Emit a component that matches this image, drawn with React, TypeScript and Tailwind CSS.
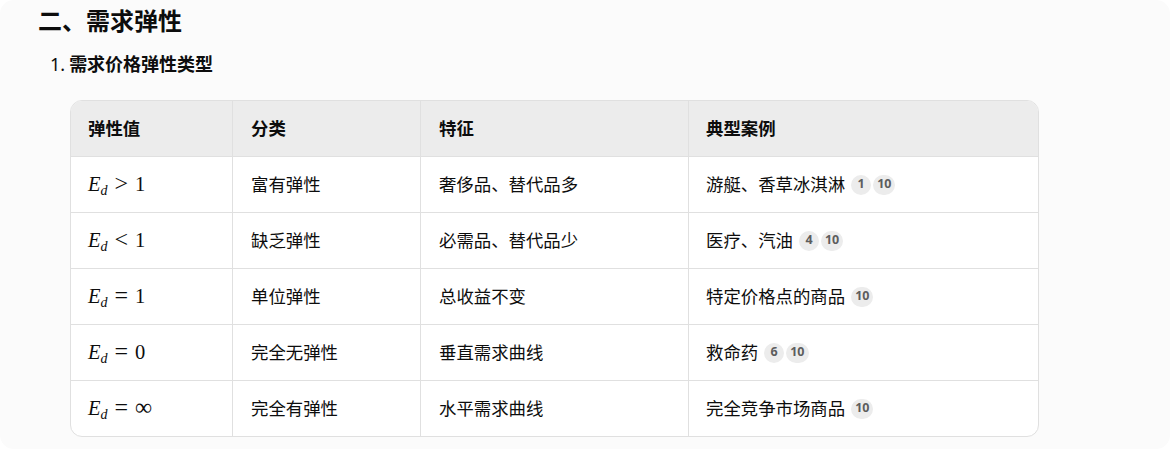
type Row = {
  rel: string;
  rhs: string;
  kind: string;
  trait: string;
  cases: string;
  refs: string[];
};

const rows: Row[] = [
  { rel: ">", rhs: "1", kind: "富有弹性", trait: "奢侈品、替代品多", cases: "游艇、香草冰淇淋", refs: ["1", "10"] },
  { rel: "<", rhs: "1", kind: "缺乏弹性", trait: "必需品、替代品少", cases: "医疗、汽油", refs: ["4", "10"] },
  { rel: "=", rhs: "1", kind: "单位弹性", trait: "总收益不变", cases: "特定价格点的商品", refs: ["10"] },
  { rel: "=", rhs: "0", kind: "完全无弹性", trait: "垂直需求曲线", cases: "救命药", refs: ["6", "10"] },
  { rel: "=", rhs: "∞", kind: "完全有弹性", trait: "水平需求曲线", cases: "完全竞争市场商品", refs: ["10"] },
];

const cjk = "font-['Segoe_UI','Noto_Sans','Noto_Sans_CJK_SC',sans-serif]";

function Badge({ n }: { n: string }) {
  return (
    <span className="inline-flex h-[20px] min-w-[20px] items-center justify-center rounded-full bg-[#ececec] px-[4px] font-['Noto_Sans','Liberation_Sans',sans-serif] text-[12.5px] font-bold text-[#5d5d5d]">
      {n}
    </span>
  );
}

function Formula({ rel, rhs }: { rel: string; rhs: string }) {
  return (
    <span className="flex items-baseline font-['Liberation_Serif','DejaVu_Serif',serif] text-[20.5px] text-[#0d0d0d]">
      <i>E</i>
      <i className="relative top-[4px] text-[14px]">d</i>
      <span className="mx-[7px] text-[24px] leading-none">{rel}</span>
      <span className={rhs === "∞" ? "text-[24px] leading-none" : ""}>{rhs}</span>
    </span>
  );
}

export default function App() {
  return (
    <div className="h-[449px] w-[1170px] bg-white">
      <div className={`h-full w-full rounded-[14px] bg-[#fbfbfb] text-[#0d0d0d] ${cjk}`}>
        <h2 className="pl-[38px] pt-[6px] text-[24px] font-bold leading-[30px]">二、需求弹性</h2>
        <div className="mt-[17px] flex pl-[50px] text-[18px] font-bold leading-[22px]">
          <span className="mr-[4px] font-normal">1.</span>
          <span>需求价格弹性类型</span>
        </div>

        <div className="ml-[70px] mt-[25px] w-[969px] overflow-hidden rounded-[12px] border border-[#e0e0e0] bg-white">
          <div className="grid h-[55px] grid-cols-[162px_188px_268px_1fr] items-center bg-[#ececec] text-[17.4px] font-bold">
            <div className="flex h-full items-center border-r border-[#e0e0e0] pl-[17px]">弹性值</div>
            <div className="flex h-full items-center border-r border-[#e0e0e0] pl-[18px]">分类</div>
            <div className="flex h-full items-center border-r border-[#e0e0e0] pl-[18px]">特征</div>
            <div className="flex h-full items-center pl-[17px]">典型案例</div>
          </div>
          {rows.map((r, i) => (
            <div
              key={i}
              className="grid h-[56px] grid-cols-[162px_188px_268px_1fr] border-t border-[#e0e0e0] text-[17.4px]"
            >
              <div className="flex h-full items-center border-r border-[#e0e0e0] pl-[17px]">
                <Formula rel={r.rel} rhs={r.rhs} />
              </div>
              <div className="flex h-full items-center border-r border-[#e0e0e0] pl-[18px]">{r.kind}</div>
              <div className="flex h-full items-center border-r border-[#e0e0e0] pl-[18px]">{r.trait}</div>
              <div className="flex h-full items-center pl-[17px]">
                <span>{r.cases}</span>
                <span className="ml-[6px] flex gap-[2px]">
                  {r.refs.map((n) => (
                    <Badge key={n} n={n} />
                  ))}
                </span>
              </div>
            </div>
          ))}
        </div>
      </div>
    </div>
  );
}
